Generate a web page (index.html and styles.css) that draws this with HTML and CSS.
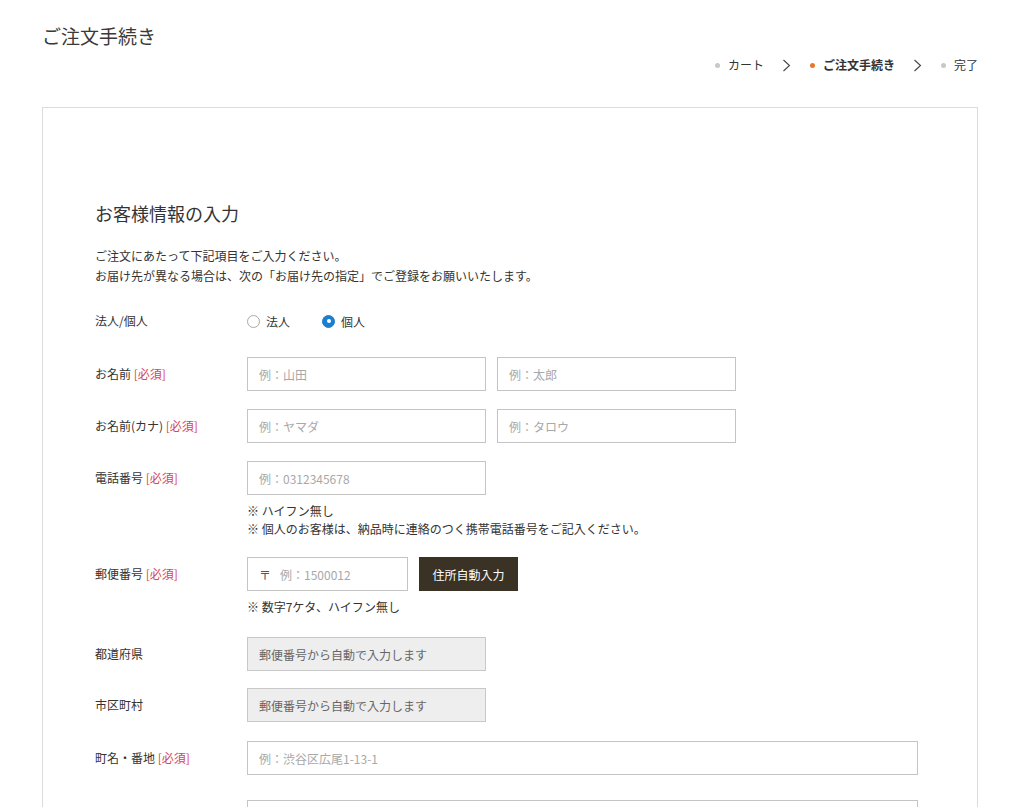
FILE: index.html
```html
<!DOCTYPE html>
<html lang="ja">
<head>
<meta charset="utf-8">
<title>ご注文手続き</title>
<link rel="stylesheet" href="styles.css">
</head>
<body>
<div class="page">
  <h1 class="page-title">ご注文手続き</h1>
  <nav class="steps">
    <span class="step"><span class="dot"></span>カート</span>
    <svg class="sep" width="9" height="13" viewBox="0 0 9 13"><polyline points="1.5,1 7.5,6.5 1.5,12" fill="none" stroke="#444" stroke-width="1.1"/></svg>
    <span class="step current"><span class="dot"></span>ご注文手続き</span>
    <svg class="sep" width="9" height="13" viewBox="0 0 9 13"><polyline points="1.5,1 7.5,6.5 1.5,12" fill="none" stroke="#444" stroke-width="1.1"/></svg>
    <span class="step"><span class="dot"></span>完了</span>
  </nav>
  <section class="panel">
    <h2 class="section-title">お客様情報の入力</h2>
    <p class="lead">ご注文にあたって下記項目をご入力ください。<br>お届け先が異なる場合は、次の「お届け先の指定」でご登録をお願いいたします。</p>

    <div class="row row-radio">
      <div class="label">法人/個人</div>
      <div class="field radios">
        <label class="radio"><span class="circle"></span>法人</label>
        <label class="radio checked"><span class="circle"></span>個人</label>
      </div>
    </div>

    <div class="row">
      <div class="label">お名前 <span class="req">[必須]</span></div>
      <div class="field pair">
        <div class="input w238"><span class="ph">例：山田</span></div>
        <div class="input w238"><span class="ph">例：太郎</span></div>
      </div>
    </div>

    <div class="row">
      <div class="label">お名前(カナ) <span class="req">[必須]</span></div>
      <div class="field pair">
        <div class="input w238"><span class="ph">例：ヤマダ</span></div>
        <div class="input w238"><span class="ph">例：タロウ</span></div>
      </div>
    </div>

    <div class="row row-top row-phone">
      <div class="label">電話番号 <span class="req">[必須]</span></div>
      <div class="field">
        <div class="input w238"><span class="ph">例：0312345678</span></div>
        <p class="note">※ ハイフン無し<br>※ 個人のお客様は、納品時に連絡のつく携帯電話番号をご記入ください。</p>
      </div>
    </div>

    <div class="row row-top row-zip">
      <div class="label">郵便番号 <span class="req">[必須]</span></div>
      <div class="field">
        <div class="pair">
          <div class="input w160"><span class="zip">〒</span><span class="ph">例：1500012</span></div>
          <button class="btn" type="button">住所自動入力</button>
        </div>
        <p class="note">※ 数字7ケタ、ハイフン無し</p>
      </div>
    </div>

    <div class="row row-pref">
      <div class="label">都道府県</div>
      <div class="field">
        <div class="input w238 auto"><span>郵便番号から自動で入力します</span></div>
      </div>
    </div>

    <div class="row row-city">
      <div class="label">市区町村</div>
      <div class="field">
        <div class="input w238 auto"><span>郵便番号から自動で入力します</span></div>
      </div>
    </div>

    <div class="row row-addr">
      <div class="label">町名・番地 <span class="req">[必須]</span></div>
      <div class="field">
        <div class="input wfull"><span class="ph">例：渋谷区広尾1-13-1</span></div>
      </div>
    </div>

    <div class="row row-more">
      <div class="label"></div>
      <div class="field">
        <div class="input wfull"></div>
      </div>
    </div>
  </section>
</div>
</body>
</html>
```

FILE: styles.css
```css
* { box-sizing: border-box; }
html, body { margin: 0; padding: 0; background: #fff; }
body {
  font-family: "Noto Sans CJK JP", "Noto Sans", sans-serif;
  color: #333;
  font-size: 12px;
}
.page {
  width: 936px;
  margin-left: 42px;
}
.page-title {
  margin: 22px 0 0;
  font-size: 19px;
  line-height: 28px;
  font-weight: 400;
  color: #3a3a3a;
}
.steps {
  margin-top: 5px;
  height: 20px;
  display: flex;
  justify-content: flex-end;
  align-items: center;
  font-size: 12px;
  line-height: 20px;
  color: #333;
}
.step { display: flex; align-items: center; }
.step .dot {
  width: 5px; height: 5px; border-radius: 50%;
  background: #c8c8c8;
  margin-right: 8px;
}
.step.current { font-weight: 700; }
.step.current .dot { background: #e8772e; }
.sep {
  margin: 0 19px 0 18px;
  display: block;
}
.panel {
  margin-top: 32px;
  border: 1px solid #dcdcdc;
  border-bottom: none;
  padding: 92px 52px 40px;
  min-height: 760px;
}
.section-title {
  margin: 0;
  font-size: 18px;
  line-height: 26px;
  font-weight: 400;
  color: #333;
}
.lead {
  margin: 20px 0 17px;
  font-size: 12px;
  line-height: 20px;
}
.row {
  display: flex;
  align-items: center;
  margin-bottom: 18px;
}
.row-top { align-items: flex-start; }
.row-top .label { line-height: 34px; }
.row-radio { height: 36px; }
.row-phone { margin-bottom: 19px; }
.row-zip { margin-bottom: 21px; }
.row-pref { margin-bottom: 17px; }
.row-city { margin-bottom: 19px; }
.row-addr { margin-bottom: 25px; }
.label {
  width: 152px;
  flex: none;
  font-size: 12px;
  line-height: 16px;
}
.req { color: #d5454f; }
.field { display: flex; flex-direction: column; }
.pair { display: flex; flex-direction: row; gap: 11px; }
.radios { flex-direction: row; gap: 0; }
.radio {
  display: flex; align-items: center;
  margin-right: 32px;
  font-size: 12px;
}
.radio .circle {
  width: 13px; height: 13px; border-radius: 50%;
  border: 1px solid #a8a8a8;
  background: #fff;
  margin-right: 6px;
  position: relative;
}
.radio.checked .circle {
  border-color: #1b7fd0;
  background: #1b7fd0;
}
.radio.checked .circle::after {
  content: "";
  position: absolute;
  left: 3.5px; top: 3.5px;
  width: 4px; height: 4px; border-radius: 50%;
  background: #fff;
}
.input {
  height: 34px;
  border: 1px solid #c4c4c4;
  background: #fff;
  display: flex;
  align-items: center;
  padding-left: 11px;
  font-size: 12px;
}
.w238 { width: 239px; }
.w160 { width: 161px; }
.wfull { width: 671px; }
.ph { color: #a8a8a8; }
.zip { color: #555; margin-right: 9px; }
.input.auto {
  background: #eeeeee;
  border-color: #c8c8c8;
  color: #666;
}
.btn {
  height: 34px;
  width: 99px;
  border: none;
  background: #3a3225;
  color: #fff;
  font-family: inherit;
  font-size: 12px;
  padding: 0;
}
.note {
  margin: 7px 0 0;
  font-size: 12px;
  line-height: 18px;
  color: #333;
}
```
